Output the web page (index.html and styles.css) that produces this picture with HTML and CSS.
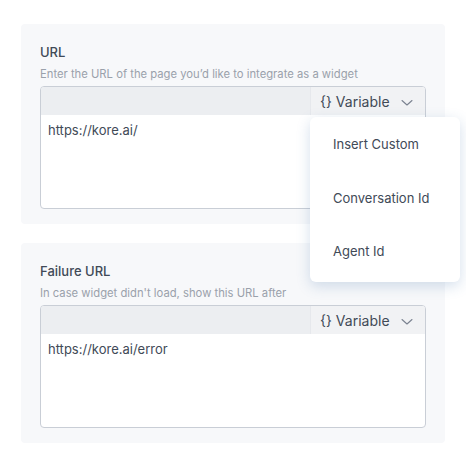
FILE: index.html
```html
<!DOCTYPE html>
<html>
<head>
<meta charset="utf-8">
<link rel="stylesheet" href="styles.css">
</head>
<body>
<div class="page">
  <section class="card">
    <div class="label">URL</div>
    <div class="help">Enter the URL of the page you’d like to integrate as a widget</div>
    <div class="field">
      <div class="field-head">
        <button class="var-btn">{} Variable
          <svg class="chev" width="12" height="8" viewBox="0 0 12 8"><path d="M1 1.5 L6 6 L11 1.5" fill="none" stroke="#7a8290" stroke-width="1.1" stroke-linecap="round" stroke-linejoin="round"/></svg>
        </button>
      </div>
      <div class="field-body">https://kore.ai/</div>
      <div class="menu">
        <div class="menu-item">Insert Custom</div>
        <div class="menu-item">Conversation Id</div>
        <div class="menu-item">Agent Id</div>
      </div>
    </div>
  </section>
  <section class="card">
    <div class="label">Failure URL</div>
    <div class="help">In case widget didn't load, show this URL after</div>
    <div class="field">
      <div class="field-head">
        <button class="var-btn">{} Variable
          <svg class="chev" width="12" height="8" viewBox="0 0 12 8"><path d="M1 1.5 L6 6 L11 1.5" fill="none" stroke="#7a8290" stroke-width="1.1" stroke-linecap="round" stroke-linejoin="round"/></svg>
        </button>
      </div>
      <div class="field-body">https://kore.ai/error</div>
    </div>
  </section>
</div>
</body>
</html>
```

FILE: styles.css
```css
* { box-sizing: border-box; }
html, body { margin: 0; padding: 0; background: #ffffff; }
body { font-family: Inter, "Noto Sans", sans-serif; color: #3f4753; }
.page {
  padding: 24px 0 0 21px;
  display: flex;
  flex-direction: column;
  gap: 19px;
}
.card {
  width: 424px;
  background: #f7f8fa;
  border-radius: 4px;
  padding: 18px 19px 15px 19px;
}
.label {
  font-size: 13px;
  font-weight: 500;
  line-height: 20px;
  color: #414a57;
}
.help {
  font-size: 11.25px;
  line-height: 16px;
  color: #9aa1ab;
  margin-top: 4px;
  white-space: nowrap;
}
.field {
  position: relative;
  margin-top: 4px;
  height: 123px;
  border: 1px solid #c9ced6;
  border-radius: 4px;
  background: #ffffff;
  display: flex;
  flex-direction: column;
}
.field-head {
  height: 28px;
  background: #eceef1;
  border-radius: 3px 3px 0 0;
  display: flex;
  justify-content: flex-end;
}
.var-btn {
  width: 115px;
  height: 28px;
  border: none;
  border-left: 1px solid #e6e8ec;
  background: #f1f2f4;
  border-radius: 0 3px 0 0;
  font-family: Inter, "Noto Sans", sans-serif;
  font-size: 14px;
  color: #414a57;
  display: flex;
  align-items: center;
  gap: 11px;
  padding: 0 0 0 9px;
}
.chev { margin-top: 3px; }
.field-body {
  flex: 1;
  padding: 6px 7px;
  font-size: 13px;
  line-height: 18px;
  color: #414a57;
}
.menu {
  position: absolute;
  left: 269px;
  top: 30px;
  width: 150px;
  height: 165px;
  background: #ffffff;
  border-radius: 6px;
  box-shadow: 0 4px 14px rgba(60, 110, 170, 0.22);
  z-index: 5;
}
.menu-item {
  height: 53.5px;
  line-height: 54px;
  padding-left: 23px;
  font-size: 13px;
  color: #414a57;
}
```
